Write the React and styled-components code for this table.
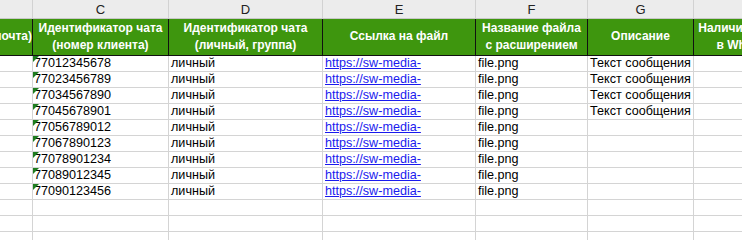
import React from "react";
import styled, { createGlobalStyle } from "styled-components";

const GlobalStyle = createGlobalStyle`
  html, body {
    margin: 0;
    padding: 0;
    background: #fff;
    overflow: hidden;
  }
`;

const COLS = "33px 136px 154px 153px 112px 106px 116px";

const Sheet = styled.div`
  width: 742px;
  height: 240px;
  overflow: hidden;
  font-family: "Liberation Sans", Arial, sans-serif;
`;

const Row = styled.div`
  display: grid;
  grid-template-columns: ${COLS};
  width: 810px;
  height: ${p => p.h}px;
`;

const Letter = styled.div`
  background: #ececec;
  border-right: 1px solid #d2d2d2;
  border-bottom: 1px solid #c8c8c8;
  font-size: 13px;
  color: #222;
  display: flex;
  align-items: center;
  justify-content: center;
`;

const Head = styled.div`
  background: #3e960e;
  border-right: 1px solid #111;
  border-bottom: 1px solid #111;
  color: #fff;
  font-weight: bold;
  font-size: 12px;
  line-height: 17px;
  display: flex;
  flex-direction: column;
  justify-content: center;
  align-items: ${p => (p.clip ? "flex-end" : "center")};
  text-align: center;
  white-space: nowrap;
  overflow: hidden;
  padding-bottom: 1px;
`;

const Cell = styled.div`
  position: relative;
  border-right: 1px solid #d4d4d4;
  border-bottom: 1px solid #d4d4d4;
  font-size: 12.6px;
  color: #000;
  display: flex;
  align-items: flex-end;
  padding-left: ${p => (p.pl != null ? p.pl : 2)}px;
  white-space: nowrap;
  overflow: hidden;
  line-height: 15px;
`;

const Flag = styled.span`
  position: absolute;
  left: 0;
  top: 0;
  width: 0;
  height: 0;
  border-top: 6px solid #1f7d1f;
  border-right: 6px solid transparent;
`;

const Link = styled.span`
  color: #1a1aee;
  text-decoration: underline;
`;

const letters = ["", "C", "D", "E", "F", "G", ""];

const heads = [
  ["почта)"],
  ["Идентификатор чата", "(номер клиента)"],
  ["Идентификатор чата", "(личный, группа)"],
  ["Ссылка на файл"],
  ["Название файла", "с расширением"],
  ["Описание"],
  ["Наличие аккаунта", "в WhatsApp"],
];

const ids = [
  "77012345678",
  "77023456789",
  "77034567890",
  "77045678901",
  "77056789012",
  "77067890123",
  "77078901234",
  "77089012345",
  "77090123456",
];

const App = () => {
  return (
    <>
      <GlobalStyle />
      <Sheet>
        <Row h={19}>
          {letters.map((l, i) => (
            <Letter key={i}>{l}</Letter>
          ))}
        </Row>
        <Row h={37}>
          {heads.map((lines, i) => (
            <Head key={i} clip={i === 0}>
              {lines.map(t => (
                <span key={t}>{t}</span>
              ))}
            </Head>
          ))}
        </Row>
        {ids.map((id, i) => (
          <Row h={16} key={id}>
            <Cell />
            <Cell pl={1}>
              <Flag />
              {id}
            </Cell>
            <Cell>личный</Cell>
            <Cell>
              <Link>https://sw-media-</Link>
            </Cell>
            <Cell>file.png</Cell>
            <Cell>{i < 4 ? "Текст сообщения" : ""}</Cell>
            <Cell />
          </Row>
        ))}
        {[0, 1, 2].map(i => (
          <Row h={16} key={"e" + i}>
            {letters.map((_, j) => (
              <Cell key={j} />
            ))}
          </Row>
        ))}
      </Sheet>
    </>
  );
};

export default App;
